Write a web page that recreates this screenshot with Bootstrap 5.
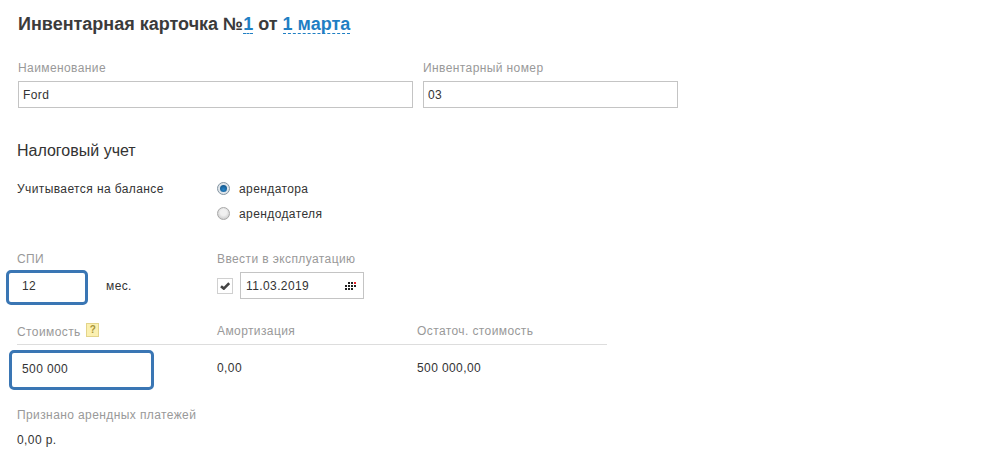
<!doctype html>
<html lang="ru"><head><meta charset="utf-8">
<link href="https://cdn.jsdelivr.net/npm/bootstrap@5.3.0/dist/css/bootstrap.min.css" rel="stylesheet">
<style>
html,body{height:459px;overflow:hidden}
body{background:#fff;font-family:"Liberation Sans",Arial,sans-serif;font-size:12px;line-height:16px;color:#333;letter-spacing:.4px}
.sheet{width:988px;padding:14px 0 0 18px}
.doc-title{font-size:18px;line-height:20px;font-weight:700;color:#3b3b3b;margin:0;height:20px;letter-spacing:0}
.doc-link{color:#1f7fc4;border-bottom:1px dashed #1f7fc4;text-decoration:none;display:inline-block;line-height:19px;height:19px}
.fld-label{color:#999;font-size:12px;line-height:16px;display:block}
.name-row{margin-top:26px;gap:10px}
.txt{display:block;height:27px;border:1px solid #c4c4c4;background:#fff;padding:0 4px;font-size:12px;color:#333;border-radius:0;outline:0;font-family:inherit;margin-top:5px;letter-spacing:.4px}
.w-name{width:395px}.w-inv{width:255px}
.sect{font-size:16px;line-height:18px;color:#333;margin:34px 0 0 -1px;font-weight:400;letter-spacing:0}
.bal-row{margin-top:21px;margin-left:-1px}
.c1{width:200px;flex:none}
.rad{display:flex;align-items:center;height:16px;margin-bottom:9px}
.rad-dot{width:13px;height:13px;border-radius:50%;border:1px solid #a8a8a8;background:radial-gradient(circle at 50% 40%,#f0f0f0 35%,#bcbcbc);margin-right:9px;margin-top:-2px;flex:none;display:flex;align-items:center;justify-content:center}
.rad-dot.on{background:#dfe5ea;border-color:#8595a2}
.rad-dot.on::after{content:"";width:7px;height:7px;border-radius:50%;background:radial-gradient(circle at 50% 65%,#2a86c8,#0d4a7c)}
.spi-row{margin-top:20px;margin-left:-1px}
.focus-in{border:3px solid #3a76b4;border-radius:5px;color:#333;font-size:12px;background:#fff;display:block;outline:0;font-family:inherit;letter-spacing:.4px}
.f-spi{width:82px;height:35px;padding:0 13px 4px;margin:3px 0 0 -11px}
.mes{margin:11px 0 0 18px}
.spi-cell{width:200px;flex:none}
.chk{width:16px;height:16px;border:1px solid #d0d0d0;display:flex;align-items:center;justify-content:center;margin-right:7px;flex:none}
.date{width:124px;height:27px;border:1px solid #c4c4c4;display:flex;align-items:center;justify-content:space-between;padding:0 7px 0 5px}
.date-row{margin-top:5px}
.cost-head{width:590px;border-bottom:1px solid #ddd;margin-top:18px;margin-left:-1px;padding-bottom:4px}
.cost-head>div,.cost-vals>div{width:200px;flex:none}
.qm{display:inline-block;width:13px;height:14px;background:#fbf0b0;border:1px solid #e3d48a;color:#a8953c;font-size:10px;line-height:12px;text-align:center;font-weight:700;vertical-align:3px;margin-left:2px;letter-spacing:0}
.cost-vals{margin-left:-1px;margin-top:5px}
.f-cost{width:145px;height:40px;padding:0 10px 2px;margin-left:-8px}
.val{margin-top:10px}
.paid{margin-top:17px;margin-left:-1px}
.paid-val{margin-top:9px}
</style></head>
<body>
<div class="sheet">
<h1 class="doc-title">Инвентарная карточка №<a class="doc-link" href="#">1</a> от <a class="doc-link" href="#">1 марта</a></h1>
<div class="d-flex name-row">
<div><label class="fld-label">Наименование</label><input class="txt w-name" value="Ford"></div>
<div><label class="fld-label">Инвентарный номер</label><input class="txt w-inv" value="03"></div>
</div>
<h2 class="sect">Налоговый учет</h2>
<div class="d-flex bal-row">
<div class="c1">Учитывается на балансе</div>
<div>
<div class="rad"><span class="rad-dot on"></span>арендатора</div>
<div class="rad"><span class="rad-dot"></span>арендодателя</div>
</div>
</div>
<div class="d-flex spi-row">
<div class="spi-cell"><span class="fld-label">СПИ</span>
<div class="d-flex"><input class="focus-in f-spi" value="12"><span class="mes">мес.</span></div></div>
<div><span class="fld-label">Ввести в эксплуатацию</span>
<div class="d-flex align-items-center date-row"><span class="chk"><svg width="10" height="8" viewBox="0 0 10 8"><path d="M1 4.2l2.8 2.4L9.2 1.2" fill="none" stroke="#444" stroke-width="2.6"/></svg></span>
<div class="date"><span>11.03.2019</span><svg width="11" height="8" viewBox="0 0 11 8"><g fill="#222"><rect x="3" y="0" width="2" height="2"/><rect x="6" y="0" width="2" height="2"/><rect x="0" y="3" width="2" height="2"/><rect x="3" y="3" width="2" height="2"/><rect x="6" y="3" width="2" height="2"/><rect x="9" y="3" width="2" height="2"/><rect x="0" y="6" width="2" height="2"/><rect x="3" y="6" width="2" height="2"/><rect x="6" y="6" width="2" height="2"/></g><rect x="9" y="0" width="2" height="2" fill="#e8202a"/></svg></div></div></div>
</div>
<div class="d-flex cost-head fld-label"><div>Стоимость <span class="qm">?</span></div><div>Амортизация</div><div>Остаточ. стоимость</div></div>
<div class="d-flex cost-vals">
<div><input class="focus-in f-cost" value="500 000"></div>
<div class="val">0,00</div><div class="val">500 000,00</div>
</div>
<div class="paid"><span class="fld-label">Признано арендных платежей</span><div class="paid-val">0,00 р.</div></div>
</div>
</body></html>
